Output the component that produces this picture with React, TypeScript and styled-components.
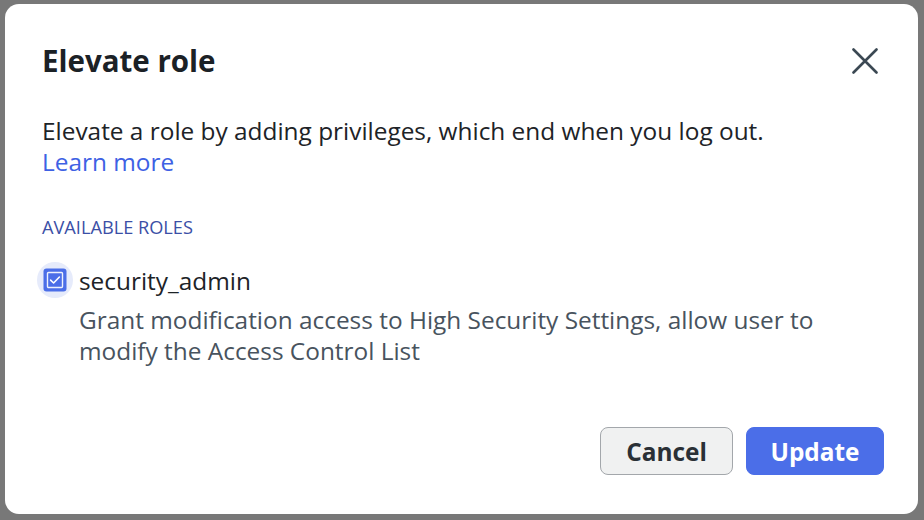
import React from "react";
import styled, { createGlobalStyle } from "styled-components";

const Global = createGlobalStyle`
  html, body { margin: 0; padding: 0; }
  body { font-family: "Open Sans", "Noto Sans", sans-serif; background: #777777; }
  * { box-sizing: border-box; }
`;

const Overlay = styled.div`
  width: 924px;
  height: 520px;
  background: #787878;
  padding: 4px 6px 6px 5px;
`;

const Modal = styled.div`
  height: 100%;
  background: #ffffff;
  border-radius: 14px;
  padding: 0 34px 39px 37px;
  display: flex;
  flex-direction: column;
`;

const Header = styled.div`
  display: flex;
  align-items: center;
  justify-content: space-between;
  padding-top: 37px;
  height: 76px;
`;

const Title = styled.h2`
  margin: 0;
  font-size: 29.5px;
  line-height: 38px;
  font-weight: 700;
  color: #1b2126;
`;

const CloseButton = styled.button`
  width: 38px;
  height: 38px;
  border: none;
  background: none;
  padding: 0;
  display: flex;
  align-items: center;
  justify-content: center;
  cursor: pointer;
`;

const Description = styled.p`
  margin: 35px 0 0;
  font-size: 24.4px;
  line-height: 31px;
  color: #1d2327;
`;

const Link = styled.a`
  color: #3e61e4;
  text-decoration: none;
`;

const SectionLabel = styled.div`
  margin-top: 38px;
  font-size: 18.2px;
  line-height: 24px;
  color: #3b4fa6;
`;

const RoleRow = styled.div`
  margin-top: 26px;
  display: flex;
  align-items: flex-start;
`;

const CheckHalo = styled.div`
  width: 36px;
  height: 36px;
  margin-left: -5px;
  margin-top: -3px;
  border-radius: 50%;
  background: #e6ebfb;
  display: flex;
  align-items: center;
  justify-content: center;
  flex-shrink: 0;
`;

const RoleText = styled.div`
  display: flex;
  flex-direction: column;
  margin-left: 6px;
`;

const RoleName = styled.div`
  font-size: 24.4px;
  line-height: 31px;
  color: #1d2327;
`;

const RoleDesc = styled.div`
  margin-top: 8px;
  font-size: 24.4px;
  line-height: 31px;
  color: #48535e;
`;

const Footer = styled.div`
  margin-top: auto;
  display: flex;
  justify-content: flex-end;
  gap: 13px;
`;

const Button = styled.button<{ $primary?: boolean }>`
  height: 48px;
  padding: 0 ${(p) => (p.$primary ? "23.5px" : "25px")};
  border-radius: 8px;
  font-family: "Open Sans", "Noto Sans", sans-serif;
  font-size: 24.4px;
  font-weight: 700;
  cursor: pointer;
  border: 1px solid ${(p) => (p.$primary ? "#4b6ee8" : "#a3a7ab")};
  background: ${(p) => (p.$primary ? "#4b6ee8" : "#f0f1f1")};
  color: ${(p) => (p.$primary ? "#ffffff" : "#2a3036")};
`;

const CheckIcon = () => (
  <svg width="24" height="24" viewBox="0 0 24 24">
    <rect x="0.5" y="0.5" width="23" height="23" rx="3" fill="#4b6ee8" />
    <rect x="4.5" y="4.5" width="15" height="15" rx="1" fill="none" stroke="#ffffff" strokeWidth="1.4" opacity="0.9" />
    <path d="M7.6 12.1 L10.6 15 L16.4 9" fill="none" stroke="#ffffff" strokeWidth="1.6" strokeLinecap="round" strokeLinejoin="round" />
  </svg>
);

const XIcon = () => (
  <svg width="26" height="26" viewBox="0 0 26 26">
    <path d="M1.5 1.5 L24.5 24.5 M24.5 1.5 L1.5 24.5" stroke="#3b4853" strokeWidth="2.6" strokeLinecap="round" />
  </svg>
);

export default function App() {
  return (
    <>
      <Global />
      <Overlay>
        <Modal>
          <Header>
            <Title>Elevate role</Title>
            <CloseButton aria-label="Close">
              <XIcon />
            </CloseButton>
          </Header>
          <Description>
            Elevate a role by adding privileges, which end when you log out.
            <br />
            <Link href="#">Learn more</Link>
          </Description>
          <SectionLabel>AVAILABLE ROLES</SectionLabel>
          <RoleRow>
            <CheckHalo>
              <CheckIcon />
            </CheckHalo>
            <RoleText>
              <RoleName>security_admin</RoleName>
              <RoleDesc>
                Grant modification access to High Security Settings, allow user to
                <br />
                modify the Access Control List
              </RoleDesc>
            </RoleText>
          </RoleRow>
          <Footer>
            <Button>Cancel</Button>
            <Button $primary>Update</Button>
          </Footer>
        </Modal>
      </Overlay>
    </>
  );
}
